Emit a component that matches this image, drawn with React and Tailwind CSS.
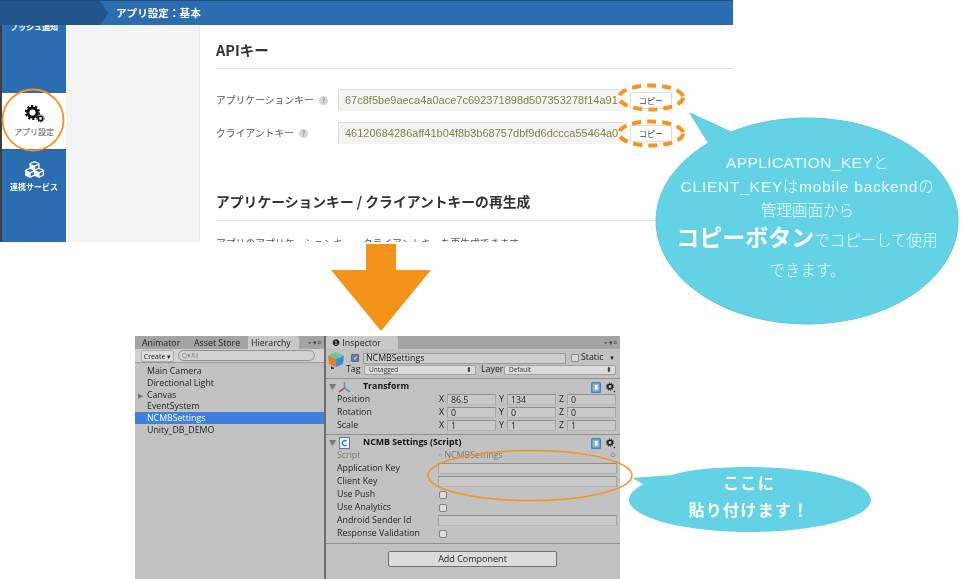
import React from 'react';
import { FaCubes } from 'react-icons/fa';

const jp = 'font-["Noto_Sans_CJK_JP","Noto_Sans",sans-serif]';
const bubble = 'font-["Liberation_Sans","Noto_Sans_CJK_JP",sans-serif]';
const unity = 'font-["Open_Sans",sans-serif]';

const hierarchy = [
  { name: 'Main Camera' },
  { name: 'Directional Light' },
  { name: 'Canvas', fold: true },
  { name: 'EventSystem' },
  { name: 'NCMBSettings', selected: true },
  { name: 'Unity_DB_DEMO' },
];

const transformRows = [
  { label: 'Position', x: '86.5', y: '134', z: '0' },
  { label: 'Rotation', x: '0', y: '0', z: '0' },
  { label: 'Scale', x: '1', y: '1', z: '1' },
];

const apiKeys = [
  { label: 'アプリケーションキー', value: '67c8f5be9aeca4a0ace7c692371898d507353278f14a91', labelWidth: 'w-[103px]' },
  { label: 'クライアントキー', value: '46120684286aff41b04f8b3b68757dbf9d6dccca55464a0', labelWidth: 'w-[83px]' },
];

const Gears = () => (
  <svg width="20" height="18" viewBox="0 0 20 18">
    <circle cx="7.5" cy="7.5" r="4.6" fill="none" stroke="#111" strokeWidth="3" />
    <circle cx="7.5" cy="7.5" r="6.6" fill="none" stroke="#111" strokeWidth="2" strokeDasharray="2.2 2" />
    <circle cx="15.5" cy="13.5" r="2.2" fill="none" stroke="#111" strokeWidth="1.6" />
    <circle cx="15.5" cy="13.5" r="3.5" fill="none" stroke="#111" strokeWidth="1" strokeDasharray="1.2 1.1" />
  </svg>
);

const HelpBook = () => (
  <svg width="10" height="11" viewBox="0 0 10 11">
    <rect width="10" height="11" rx="1.5" fill="#4a7fb5" />
    <rect x="1.5" y="1.5" width="7" height="8" fill="#8fb4d8" />
    <rect x="4" y="3" width="2.5" height="4.5" fill="#fff" />
  </svg>
);

const SmallGear = () => (
  <svg width="11" height="11" viewBox="0 0 11 11">
    <circle cx="5" cy="4.6" r="2.3" fill="none" stroke="#222" strokeWidth="1.6" />
    <circle cx="5" cy="4.6" r="3.6" fill="none" stroke="#222" strokeWidth="1" strokeDasharray="1.2 1" />
    <path d="M8.5 9l2 0-1 1.5z" fill="#222" />
  </svg>
);

const Fold = () => (
  <svg width="7" height="6" viewBox="0 0 7 6" className="shrink-0">
    <path d="M0 0h7L3.5 6z" fill="#777" />
  </svg>
);

const UnityCube = () => (
  <svg width="16" height="17" viewBox="0 0 16 17" className="shrink-0">
    <path d="M8 0L16 3.5 8 7 0 3.5z" fill="#6fc7a0" />
    <path d="M0 3.5L8 7v8L1 12z" fill="#e07f2c" />
    <path d="M16 3.5L8 7v8l7-3z" fill="#3b8fd0" />
    <path d="M3 14l3 2v1H3z" fill="#333" />
  </svg>
);

const TransformIcon = () => (
  <svg width="13" height="12" viewBox="0 0 13 12" className="shrink-0">
    <path d="M6.5 7V1" stroke="#5b9bd5" strokeWidth="1.6" />
    <path d="M6.5 7L1 11" stroke="#d8483a" strokeWidth="1.6" />
    <path d="M6.5 7L12 11" stroke="#4f8fdc" strokeWidth="1.6" />
  </svg>
);

const ScriptIcon = () => (
  <svg width="11" height="12" viewBox="0 0 11 12" className="shrink-0">
    <rect x="0.5" y="0.5" width="10" height="11" fill="#eef2f6" stroke="#53799f" />
    <path d="M7.5 4.2A2.5 2.5 0 1 0 7.5 8" fill="none" stroke="#3a78b8" strokeWidth="1.4" />
  </svg>
);

const Field = ({ children, className = '' }) => (
  <div className={`h-[11px] bg-[#c9c9c9] border-t border-[#8c8c8c] border-x border-x-[#a5a5a5] border-b border-b-[#b5b5b5] pl-[3px] text-[8.8px] leading-[10px] text-[#222] ${className}`}>
    {children}
  </div>
);

const Check = () => (
  <div className="w-[8px] h-[8px] rounded-[2px] border border-[#808080] bg-[#dedede] ml-[1px]" />
);

const InspectorRow = ({ label, muted, children }) => (
  <div className="flex items-center h-[13px] pl-[11px] pr-[3px]">
    <div className={`w-[101px] shrink-0 text-[8.8px] ${muted ? 'text-[#7a7a7a]' : 'text-[#222]'}`}>{label}</div>
    <div className="flex-1">{children}</div>
  </div>
);

const ComponentHeader = ({ icon, title }) => (
  <div className="flex items-center h-[12px] pl-[3px] pr-[4px]">
    <Fold />
    <div className="ml-[2px] w-[13px] flex justify-center">{icon}</div>
    <div className="ml-[12px] flex-1 text-[8.8px] font-bold text-[#111]">{title}</div>
    <HelpBook />
    <div className="ml-[4px]"><SmallGear /></div>
  </div>
);

const Sidebar = () => (
  <div className="w-[66px] shrink-0 border-l-2 border-[#3c3c3c] flex flex-col bg-[#2a6db0]">
    <div className="h-[68px] overflow-hidden">
      <div className={`${jp} text-[8px] font-bold text-white text-center leading-[10px] -mt-[3px]`}>プッシュ通知</div>
    </div>
    <div className="h-[56px] bg-white flex flex-col items-center pt-[12px] shadow-[0_1px_1px_#3a5f85]">
      <div className="ml-[2px] h-[18px]"><Gears /></div>
      <div className={`${jp} mt-[4px] text-[8px] text-[#555] leading-[10px]`}>アプリ設定</div>
    </div>
    <div className="flex flex-col items-center pt-[11px]">
      <FaCubes className="text-white text-[19px]" />
      <div className={`${jp} mt-[3px] text-[8px] font-bold text-white leading-[10px]`}>連携サービス</div>
    </div>
  </div>
);

const ApiPanel = () => (
  <div className={`${jp} flex-1 px-[16px] overflow-hidden`}>
    <h2 className="mt-[13px] h-[24px] text-[14.5px] font-bold text-[#333] leading-[24px]">APIキー</h2>
    <div className="mt-[6px] border-t border-[#ddd] mr-[-16px]" />
    <div className="mt-[20px] flex flex-col gap-[11px]">
      {apiKeys.map((k) => (
        <div key={k.label} className="flex items-center h-[22px]">
          <div className="w-[122px] shrink-0 flex items-center">
            <div className={`${k.labelWidth} text-[9.8px] text-[#555] whitespace-nowrap`}>{k.label}</div>
            <div className="w-[9px] h-[9px] rounded-full bg-[#d5d5d5] text-[7px] leading-[9px] text-center text-[#777]">?</div>
          </div>
          <div className="w-[287px] h-[22px] bg-[#f3f3f1] border-l border-t border-[#ddd] pl-[6px] overflow-hidden whitespace-nowrap font-['Liberation_Sans',sans-serif] text-[11px] leading-[21px] text-[#86804a]">
            {k.value}
          </div>
          <div className="ml-[5px] w-[42px] h-[17px] bg-white border border-[#ddd] rounded-[2px] text-[8px] leading-[15px] text-center text-[#444]">コピー</div>
        </div>
      ))}
    </div>
    <h2 className="mt-[46px] h-[22px] text-[13.8px] font-bold text-[#333] leading-[22px] whitespace-nowrap">アプリケーションキー / クライアントキーの再生成</h2>
    <div className="mt-[8px] border-t border-[#ddd] mr-[-16px]" />
    <p className="mt-[17px] text-[9.8px] text-[#555] leading-[10px] whitespace-nowrap">アプリのアプリケーションキー、クライアントキーを再生成できます。</p>
  </div>
);

const HierarchyPanel = () => (
  <div className={`${unity} w-[189px] shrink-0 bg-[#c2c2c2]`}>
    <div className="h-[13px] bg-[#a4a4a4] flex items-end text-[8.8px] text-[#222] pl-[7px]">
      <div className="w-[52px] h-[13px] leading-[14px]">Animator</div>
      <div className="w-[54px] h-[13px] leading-[14px]">Asset Store</div>
      <div className="w-[51px] h-[13px] leading-[14px] bg-[#c8c8c8] rounded-t-[2px] pl-[3px]">Hierarchy</div>
      <div className="ml-auto pr-[3px] text-[7px] leading-[13px] text-[#444]">▪ ▾≡</div>
    </div>
    <div className="h-[14px] bg-[#d2d2d2] border-b border-[#9a9a9a] flex items-center pl-[6px] pr-[9px]">
      <div className="text-[7px] text-[#222] w-[33px] h-[12px] leading-[11px] border border-[#aaa] rounded-[2px] text-center bg-[#ddd]">Create ▾</div>
      <div className="ml-[4px] flex-1 h-[11px] rounded-full border border-[#8e8e8e] text-[6.5px] leading-[9px] pl-[3px] text-[#888]">Q▾All</div>
    </div>
    <div className="pt-[2px]">
      {hierarchy.map((item) => (
        <div
          key={item.name}
          className={`h-[11.8px] pl-[12px] text-[8.8px] leading-[13px] relative ${item.selected ? 'bg-[#3d80df] text-white' : 'text-[#222]'}`}
        >
          {item.fold && <span className="absolute left-[3px] top-0 text-[7px] text-[#777]">▶</span>}
          {item.name}
        </div>
      ))}
    </div>
  </div>
);

const InspectorPanel = () => (
  <div className={`${unity} flex-1 bg-[#c2c2c2] border-l-2 border-[#6e6e6e]`}>
    <div className="h-[13px] bg-[#a4a4a4] flex items-end">
      <div className="w-[72px] h-[13px] bg-[#c8c8c8] rounded-t-[2px] text-[8.8px] leading-[14px] text-[#222] pl-[6px]">❶ Inspector</div>
      <div className="ml-auto pr-[3px] text-[7px] leading-[13px] text-[#444]">▪ ▾≡</div>
    </div>
    <div className="h-[30px] border-b border-[#8e8e8e] pl-[2px] pr-[3px] pt-[3px] flex">
      <UnityCube />
      <div className="flex-1 ml-[6px]">
        <div className="flex items-center h-[12px]">
          <div className="ml-[1px] w-[8px] h-[8px] bg-[#5c82b3] border border-[#666] rounded-[1px] text-[6px] leading-[6px] text-center text-white">✓</div>
          <div className="ml-[4px] w-[203px] h-[11px] bg-[#cfcfcf] border border-[#999] text-[8.8px] leading-[9px] pl-[2px] text-[#111]">NCMBSettings</div>
          <div className="ml-[5px] w-[8px] h-[8px] border border-[#888] bg-[#d8d8d8] rounded-[1px]" />
          <div className="ml-[2px] text-[8.8px] text-[#222]">Static</div>
          <div className="ml-auto mr-[2px] text-[6px] text-[#222]">▼</div>
        </div>
        <div className="flex items-center h-[12px] text-[8.8px] text-[#222] mr-[1px]">
          <div className="w-[17px] shrink-0 -ml-[4px]">Tag</div>
          <div className="ml-[1px] w-[112px] h-[10px] bg-[#dcdcdc] border border-[#a0a0a0] rounded-[2px] text-[6.5px] leading-[8px] pl-[4px] text-[#333] flex justify-between pr-[3px]"><span>Untagged</span><span>⬍</span></div>
          <div className="ml-[5px] w-[21px]">Layer</div>
          <div className="ml-[2px] flex-1 h-[10px] bg-[#dcdcdc] border border-[#a0a0a0] rounded-[2px] text-[6.5px] leading-[8px] pl-[4px] text-[#333] flex justify-between pr-[3px]"><span>Default</span><span>⬍</span></div>
        </div>
      </div>
    </div>
    <div className="pt-[2px] pb-[2px] border-b border-[#8e8e8e]">
      <ComponentHeader icon={<TransformIcon />} title="Transform" />
      {transformRows.map((r) => (
        <div key={r.label} className="flex items-center h-[13px] pl-[11px] text-[8.8px] text-[#222]">
          <div className="w-[102px] shrink-0">{r.label}</div>
          {[['X', r.x], ['Y', r.y], ['Z', r.z]].map(([axis, val], i) => (
            <div key={axis} className={`flex items-center ${i > 0 ? 'ml-[3px]' : ''}`}>
              <span className="w-[8px]">{axis}</span>
              <Field className="w-[49px]">{val}</Field>
            </div>
          ))}
        </div>
      ))}
    </div>
    <div className="pt-[2px] pb-[3px] border-b border-[#8e8e8e]">
      <ComponentHeader icon={<ScriptIcon />} title="NCMB Settings (Script)" />
      <InspectorRow label="Script" muted>
        <div className="flex items-center justify-between pl-[1px] pr-[1px] text-[8.8px] text-[#777]">
          <span>▫ NCMBSettings</span><span className="text-[7px]">⊙</span>
        </div>
      </InspectorRow>
      <InspectorRow label="Application Key"><Field /></InspectorRow>
      <InspectorRow label="Client Key"><Field /></InspectorRow>
      <InspectorRow label="Use Push"><Check /></InspectorRow>
      <InspectorRow label="Use Analytics"><Check /></InspectorRow>
      <InspectorRow label="Android Sender Id"><Field /></InspectorRow>
      <InspectorRow label="Response Validation"><Check /></InspectorRow>
    </div>
    <div className="pt-[7px] flex justify-center">
      <div className="w-[169px] h-[16px] -ml-[1px] rounded-[2px] border border-[#6f6f6f] bg-[#dcdcdc] text-[9px] leading-[14px] text-center text-[#222]">Add Component</div>
    </div>
  </div>
);

// annotations that sit over the two screenshots
const Annotations = () => (
  <svg width="964" height="579" viewBox="0 0 964 579" className="absolute inset-0 pointer-events-none">
    <circle cx="33" cy="120" r="30.5" fill="none" stroke="#f7931e" strokeWidth="1.8" />
    <ellipse cx="651" cy="97.5" rx="32" ry="12" fill="none" stroke="#f7931e" strokeWidth="4" strokeDasharray="9 6" />
    <ellipse cx="651" cy="133.5" rx="32" ry="12" fill="none" stroke="#f7931e" strokeWidth="4" strokeDasharray="9 6" />
    <path d="M366 244h30v26h35l-50 61-50-61h35z" fill="#f4931a" />
    <path d="M690 113L731 132A151 103 0 1 1 708.4 143z" fill="#64d2e5" stroke="#5cc6d8" strokeWidth="1" />
    <ellipse cx="530" cy="475.5" rx="102" ry="25" fill="none" stroke="#f7931e" strokeWidth="1.5" />
    <path d="M632 478L672 475C690 469 720 467 750 467C817 467 871 481.5 871 499.5C871 517.5 817 532 750 532C683 532 629 517.5 629 499.5C629 494 635 489 643 484z" fill="#64d2e5" />
  </svg>
);

export default function App() {
  return (
    <div className="relative w-[964px] h-[579px] bg-white overflow-hidden">
      <div className="w-[733px] h-[242px] overflow-hidden flex flex-col blur-[0.3px]">
        <div className={`${jp} relative h-[25px] shrink-0 bg-[#2a6db0] border-t border-[#1d4a78] pl-[116px] text-[10.6px] font-bold leading-[23px] text-white`}>
          <div className="absolute left-0 top-0 w-[108px] h-[24px] bg-[#20558c] [clip-path:polygon(0_0,100px_0,108px_50%,100px_100%,0_100%)]" />
          <span className="relative">アプリ設定：基本</span>
        </div>
        <div className="flex flex-1 min-h-0">
          <Sidebar />
          <div className="w-[134px] shrink-0 bg-[#f4f4f4] border-r border-[#ececec]" />
          <ApiPanel />
        </div>
      </div>
      <div className="mt-[94px] ml-[135px] w-[485px] h-[243px] flex overflow-hidden blur-[0.3px]">
        <HierarchyPanel />
        <InspectorPanel />
      </div>
      <Annotations />
      <div className={`${bubble} absolute left-[656px] top-[151px] w-[303px] flex flex-col items-center text-[#eafafd] font-light text-[15.5px]`}>
        <div className="h-[24px] leading-[24px] whitespace-nowrap tracking-[0.4px]">APPLICATION_KEYと</div>
        <div className="h-[24px] leading-[24px] whitespace-nowrap tracking-[0.75px]">CLIENT_KEYはmobile backendの</div>
        <div className="h-[24px] leading-[24px] whitespace-nowrap">管理画面から</div>
        <div className="h-[30px] leading-[30px] whitespace-nowrap -ml-[1px]"><span className="text-[23px] font-bold text-white">コピーボタン</span>でコピーして使用</div>
        <div className="h-[36px] leading-[36px] whitespace-nowrap">できます。</div>
      </div>
      <div className={`${jp} absolute left-[629px] top-[467px] w-[240px] flex flex-col items-center text-white font-bold text-[16px] tracking-[1.3px]`}>
        <div className="mt-[2px] h-[27px] leading-[27px]">ここに</div>
        <div className="h-[27px] leading-[27px]">貼り付けます！</div>
      </div>
    </div>
  );
}
